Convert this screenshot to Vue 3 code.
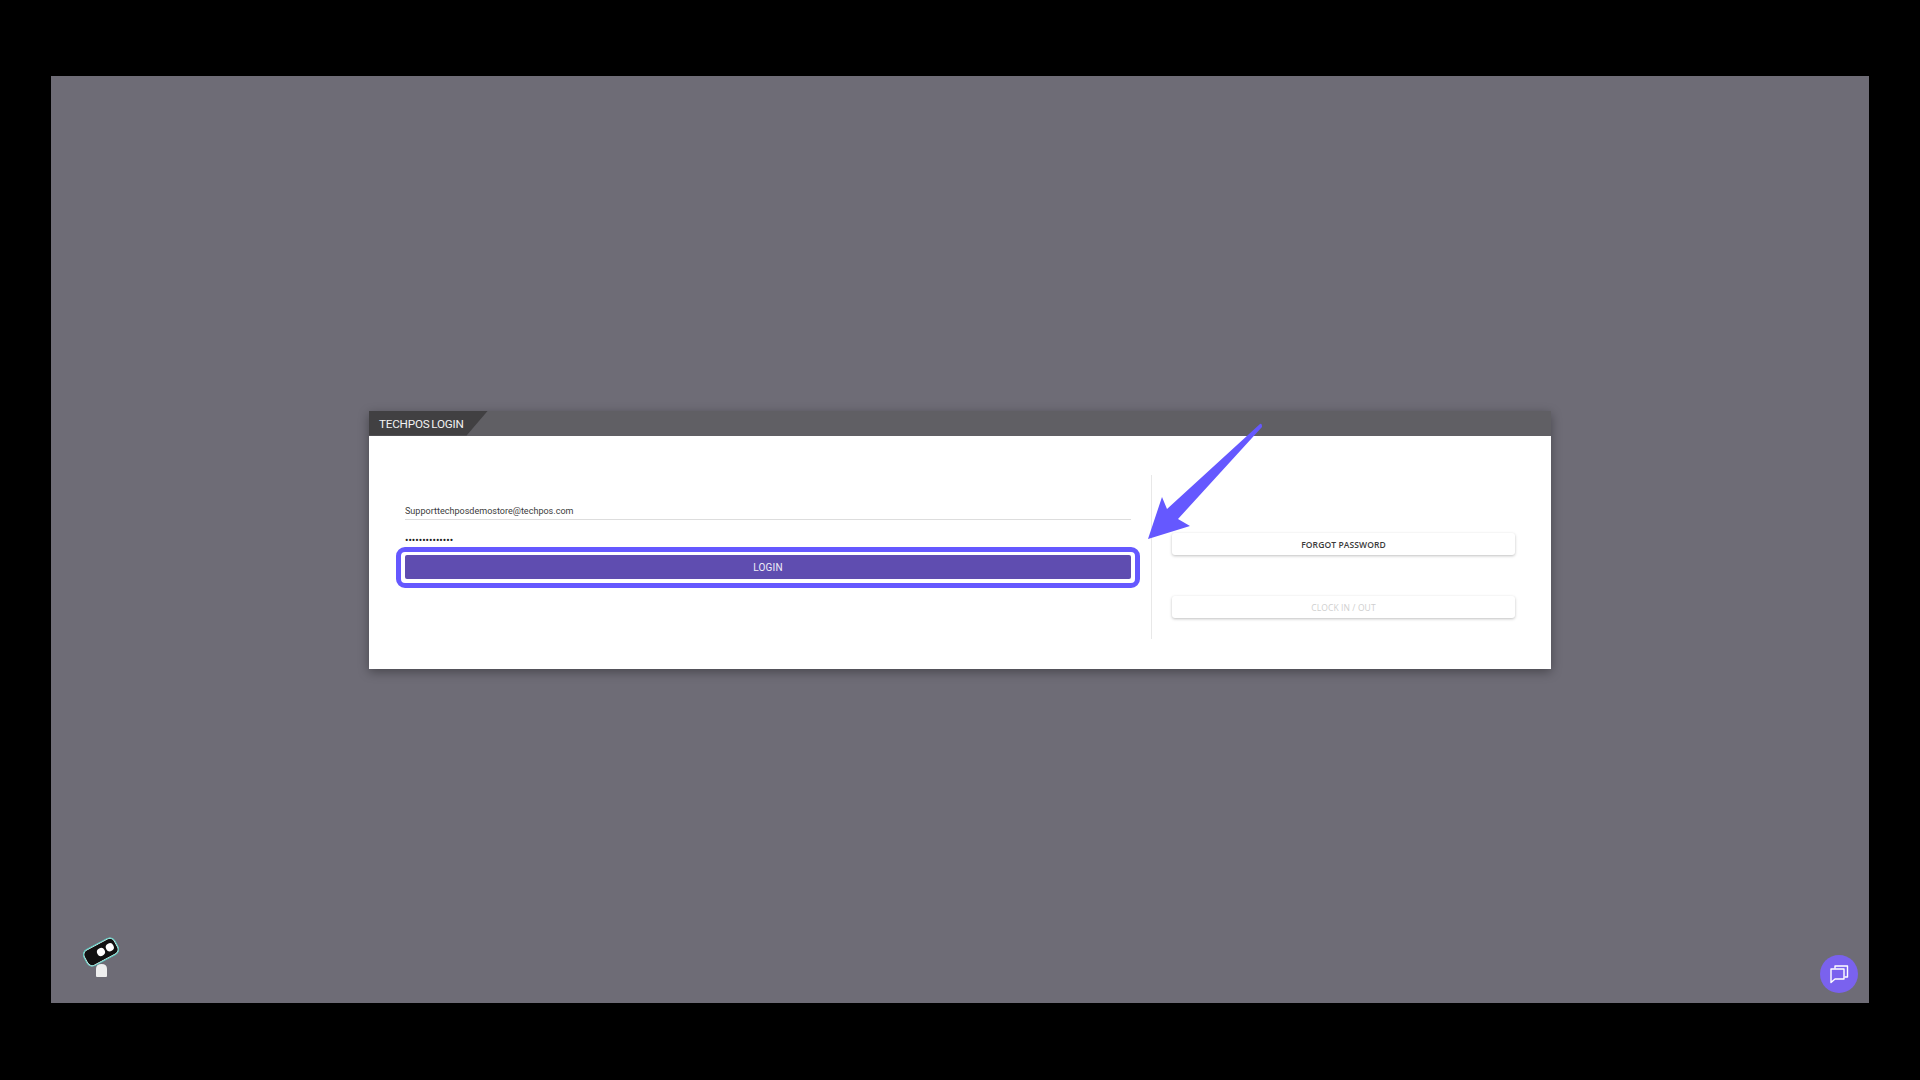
<script setup>
import { ref } from "vue";

const email = ref("Supporttechposdemostore@techpos.com");
const password = ref("aaaaaaaaaaaaaa");
</script>

<template>
  <div class="page">
    <main class="stage">
      <section class="card">
        <header class="card-head">
          <div class="tab">TECHPOS LOGIN</div>
        </header>
        <div class="card-body">
          <form class="login-form" @submit.prevent>
            <input v-model="email" class="field email" type="text" />
            <input v-model="password" class="field password" type="password" />
            <div class="login-wrap">
              <button class="login-btn" type="submit">LOGIN</button>
              <span class="ring"></span>
            </div>
          </form>
          <div class="divider"></div>
          <div class="side">
            <button class="side-btn" type="button">FORGOT PASSWORD</button>
            <button class="side-btn off" type="button" disabled>CLOCK IN / OUT</button>
          </div>
        </div>
      </section>

      <svg class="arrow" width="130" height="130" viewBox="0 0 130 130">
        <path d="M2 117 L16 75 L21 87 L114 2 Q116 1 116 5 L32 97 L44 104 Z" fill="#6558ff" />
      </svg>

      <svg class="bot" width="44" height="44" viewBox="0 0 44 44">
        <path d="M17 34 Q17 29 22.500 29 Q28 29 28 34 V41 Q28 42 27 42 H18 Q17 42 17 41 Z" fill="#eeeeee" />
        <g transform="rotate(-28 22 17)">
          <rect x="5" y="8.500" width="34" height="17" rx="5" fill="#111111" stroke="#ffffff" stroke-width="1" />
          <rect x="4.500" y="8" width="35" height="18" rx="6" fill="none" stroke="#5fd0c5" stroke-width="1" />
          <circle cx="22" cy="17" r="4" fill="#ffffff" />
          <circle cx="32" cy="17" r="4" fill="#ffffff" />
        </g>
      </svg>

      <button class="chat" type="button">
        <svg width="20" height="20" viewBox="0 0 20 20" fill="none" stroke="#ffffff" stroke-width="1.400" stroke-linejoin="round">
          <path d="M6 4.500 V2 H18.500 V13 H15.500" />
          <path d="M2 5 H15 V15 H6 L2 18.500 Z" />
        </svg>
      </button>
    </main>
  </div>
</template>

<style>
html,
body {
  margin: 0;
  background: #000000;
}
</style>

<style scoped>
.page {
  box-sizing: border-box;
  width: 1920px;
  height: 1080px;
  padding: 76px 51px 77px;
  background: #000000;
  overflow: hidden;
}

.stage {
  position: relative;
  height: 100%;
  display: flex;
  align-items: center;
  justify-content: center;
  background: #6e6c76;
}

.card {
  width: 1182px;
  height: 258px;
  background: #ffffff;
  box-shadow: 0 3px 10px rgba(0, 0, 0, 0.35);
}

.card-head {
  height: 25px;
  background: #605f64;
}

.tab {
  box-sizing: border-box;
  width: 119px;
  height: 25px;
  padding-left: 10px;
  line-height: 26px;
  font-family: Roboto, "Liberation Sans", sans-serif;
  font-size: 11.700px;
  letter-spacing: -0.2px;
  word-spacing: -1px;
  color: #f2f2f2;
  background: #414042;
  clip-path: polygon(0 0, 100% 0, 82% 100%, 0 100%);
}

.card-body {
  display: flex;
  padding: 39px 36px 30px;
}

.login-form {
  display: flex;
  flex-direction: column;
  width: 726px;
  padding-top: 28px;
}

.field {
  box-sizing: border-box;
  display: block;
  width: 100%;
  height: 17px;
  padding: 0;
  border: 0;
  outline: 0;
  background: transparent;
  font-family: Roboto, "Liberation Sans", sans-serif;
  font-size: 9.050px;
  color: #3c3c3c;
}

.email {
  border-bottom: 1px solid #dddddd;
}

.password {
  margin-top: 12px;
  font-size: 10.200px;
  color: #222222;
}

.login-wrap {
  position: relative;
  margin-top: 6px;
}

.login-btn {
  display: block;
  width: 100%;
  height: 24px;
  padding: 1px 0 0;
  border: 0;
  border-radius: 2px;
  background: #5f4db0;
  font-family: Roboto, "Liberation Sans", sans-serif;
  font-size: 10px;
  letter-spacing: 0.2px;
  color: #f0eef8;
}

.ring {
  position: absolute;
  top: -8px;
  right: -9px;
  bottom: -9px;
  left: -9px;
  border: 5px solid #6558ff;
  border-radius: 9px;
  pointer-events: none;
}

.divider {
  width: 1px;
  height: 164px;
  margin: 0 20px;
  background: #e8e8e8;
}

.side {
  display: flex;
  flex-direction: column;
  gap: 41px;
  width: 343px;
  padding-top: 58px;
}

.side-btn {
  height: 22px;
  padding: 1px 0 0;
  border: 0;
  border-radius: 3px;
  background: #ffffff;
  box-shadow: 0 1px 3px rgba(0, 0, 0, 0.25);
  font-family: "Open Sans", "Liberation Sans", sans-serif;
  font-size: 8.500px;
  font-weight: 600;
  letter-spacing: 0.1px;
  color: #3a3a3a;
}

.side-btn.off {
  font-weight: 400;
  color: #cfcfcf;
}

.arrow {
  position: absolute;
  left: 1095px;
  top: 346px;
}

.bot {
  position: absolute;
  left: 28px;
  top: 859px;
}

.chat {
  position: absolute;
  right: 11px;
  bottom: 10px;
  display: flex;
  align-items: center;
  justify-content: center;
  width: 38px;
  height: 38px;
  padding: 0;
  border: 0;
  border-radius: 50%;
  background: #7a62ee;
}
</style>
